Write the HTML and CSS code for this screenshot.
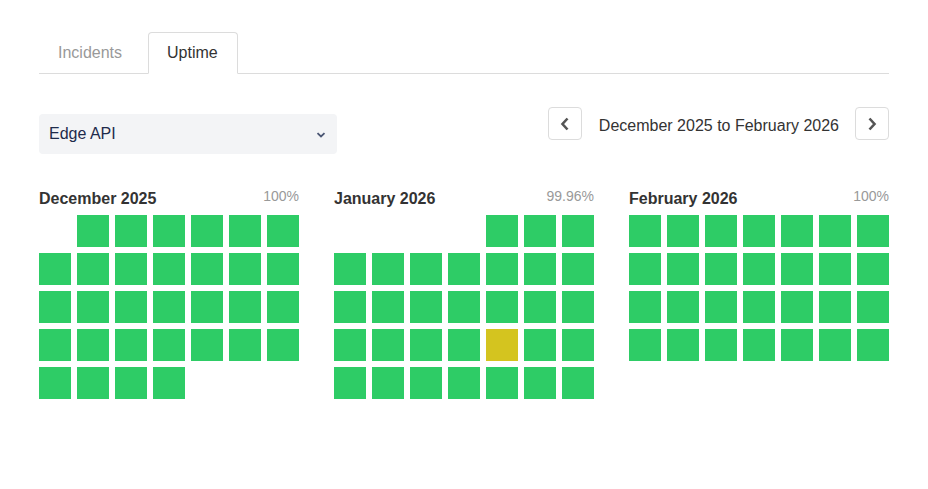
FILE: index.html
```html
<!DOCTYPE html>
<html>
<head>
<meta charset="utf-8">
<link rel="stylesheet" href="styles.css">
</head>
<body>
<div class="page">
  <div class="tabs">
    <div class="tab">Incidents</div>
    <div class="tab active">Uptime</div>
  </div>
  <div class="controls">
    <div class="select">
      <span>Edge API</span>
      <svg class="chev" width="10" height="6" viewBox="0 0 10 6"><path d="M1.5 1.2 L5 4.5 L8.5 1.2" fill="none" stroke="#4a5573" stroke-width="1.8"/></svg>
    </div>
    <div class="nav">
      <div class="btn"><svg width="12" height="16" viewBox="0 0 12 16"><path d="M8.5 2.5 L3.5 8 L8.5 13.5" fill="none" stroke="#555" stroke-width="2.6"/></svg></div>
      <div class="range">December 2025 to February 2026</div>
      <div class="btn"><svg width="12" height="16" viewBox="0 0 12 16"><path d="M3.5 2.5 L8.5 8 L3.5 13.5" fill="none" stroke="#555" stroke-width="2.6"/></svg></div>
    </div>
  </div>
  <div class="months">
    <div class="month">
      <div class="mhead"><span class="mname">December 2025</span><span class="pct">100%</span></div>
      <div class="grid">
        <div class="cell empty"></div>
        <div class="cell"></div><div class="cell"></div><div class="cell"></div><div class="cell"></div><div class="cell"></div><div class="cell"></div>
        <div class="cell"></div><div class="cell"></div><div class="cell"></div><div class="cell"></div><div class="cell"></div><div class="cell"></div><div class="cell"></div>
        <div class="cell"></div><div class="cell"></div><div class="cell"></div><div class="cell"></div><div class="cell"></div><div class="cell"></div><div class="cell"></div>
        <div class="cell"></div><div class="cell"></div><div class="cell"></div><div class="cell"></div><div class="cell"></div><div class="cell"></div><div class="cell"></div>
        <div class="cell"></div><div class="cell"></div><div class="cell"></div><div class="cell"></div>
      </div>
    </div>
    <div class="month">
      <div class="mhead"><span class="mname">January 2026</span><span class="pct">99.96%</span></div>
      <div class="grid">
        <div class="cell empty"></div><div class="cell empty"></div><div class="cell empty"></div><div class="cell empty"></div>
        <div class="cell"></div><div class="cell"></div><div class="cell"></div>
        <div class="cell"></div><div class="cell"></div><div class="cell"></div><div class="cell"></div><div class="cell"></div><div class="cell"></div><div class="cell"></div>
        <div class="cell"></div><div class="cell"></div><div class="cell"></div><div class="cell"></div><div class="cell"></div><div class="cell"></div><div class="cell"></div>
        <div class="cell"></div><div class="cell"></div><div class="cell"></div><div class="cell"></div><div class="cell warn"></div><div class="cell"></div><div class="cell"></div>
        <div class="cell"></div><div class="cell"></div><div class="cell"></div><div class="cell"></div><div class="cell"></div><div class="cell"></div><div class="cell"></div>
      </div>
    </div>
    <div class="month">
      <div class="mhead"><span class="mname">February 2026</span><span class="pct">100%</span></div>
      <div class="grid">
        <div class="cell"></div><div class="cell"></div><div class="cell"></div><div class="cell"></div><div class="cell"></div><div class="cell"></div><div class="cell"></div>
        <div class="cell"></div><div class="cell"></div><div class="cell"></div><div class="cell"></div><div class="cell"></div><div class="cell"></div><div class="cell"></div>
        <div class="cell"></div><div class="cell"></div><div class="cell"></div><div class="cell"></div><div class="cell"></div><div class="cell"></div><div class="cell"></div>
        <div class="cell"></div><div class="cell"></div><div class="cell"></div><div class="cell"></div><div class="cell"></div><div class="cell"></div><div class="cell"></div>
      </div>
    </div>
  </div>
</div>
</body>
</html>
```

FILE: styles.css
```css
html, body {
  margin: 0;
  padding: 0;
  background: #fff;
}
body {
  font-family: "Liberation Sans", Arial, Helvetica, sans-serif;
  color: #333;
}
.page {
  width: 850px;
  margin-left: 39px;
  padding-top: 32px;
}
.tabs {
  display: flex;
  gap: 7px;
  border-bottom: 1px solid #dcdcdc;
  height: 41px;
}
.tab {
  height: 41px;
  box-sizing: border-box;
  padding: 0 18px;
  display: flex;
  align-items: center;
  font-size: 16px;
  color: #999;
  border: 1px solid transparent;
  border-radius: 4px 4px 0 0;
}
.tab.active {
  color: #333;
  border-color: #dcdcdc;
  border-bottom-color: #fff;
  background: #fff;
  height: 42px;
  padding: 0 19px 0 18px;
}
.controls {
  margin-top: 33px;
  display: flex;
  justify-content: space-between;
  align-items: flex-start;
}
.select {
  margin-top: 7px;
  width: 298px;
  height: 40px;
  box-sizing: border-box;
  background: #f3f4f6;
  border-radius: 4px;
  display: flex;
  align-items: center;
  justify-content: space-between;
  padding: 0 11px 0 10px;
  font-size: 16px;
  color: #1e2b4b;
}
.chev {
  margin-top: 1px;
}
.nav {
  display: flex;
  align-items: center;
}
.btn {
  width: 34px;
  height: 33px;
  box-sizing: border-box;
  border: 1px solid #dcdcdc;
  border-radius: 4px;
  display: flex;
  align-items: center;
  justify-content: center;
}
.range {
  font-size: 16px;
  color: #333;
  padding: 0 16px 0 17px;
  margin-top: 4px;
}
.months {
  margin-top: 36px;
  display: flex;
  gap: 35px;
}
.month {
  width: 260px;
}
.mhead {
  display: flex;
  justify-content: space-between;
  align-items: baseline;
  height: 20px;
  margin-bottom: 5px;
}
.mname {
  font-size: 16px;
  font-weight: bold;
  color: #333;
}
.pct {
  font-size: 14px;
  color: #999;
  position: relative;
  top: -3px;
}
.grid {
  display: grid;
  grid-template-columns: repeat(7, 32px);
  grid-auto-rows: 32px;
  gap: 6px;
}
.cell {
  background: #2ecc66;
}
.cell.empty {
  background: transparent;
}
.cell.warn {
  background: #d4c41f;
}
```
